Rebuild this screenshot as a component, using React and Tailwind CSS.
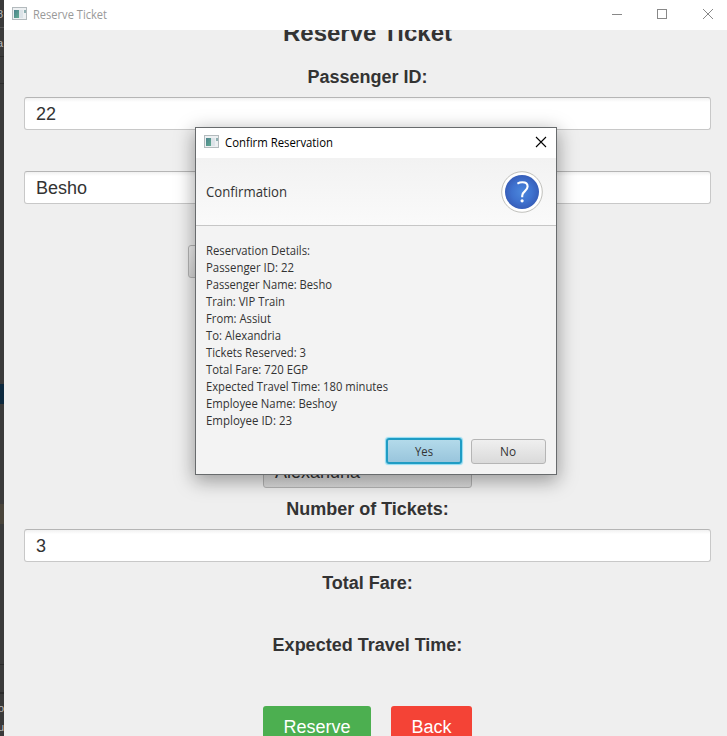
import React from "react";

const details = [
  { text: "Reservation Details:", width: 104 },
  { text: "Passenger ID: 22", width: 88 },
  { text: "Passenger Name: Besho", width: 126 },
  { text: "Train: VIP Train", width: 79 },
  { text: "From: Assiut", width: 65 },
  { text: "To: Alexandria", width: 75 },
  { text: "Tickets Reserved: 3", width: 100 },
  { text: "Total Fare: 720 EGP", width: 102 },
  { text: "Expected Travel Time: 180 minutes", width: 182 },
  { text: "Employee Name: Beshoy", width: 131 },
  { text: "Employee ID: 23", width: 86 },
];

// Single line of text stretched to an exact advance width.
function FitText({ text, width, size, baseline, fill, height }) {
  return (
    <svg className="block overflow-visible" width={width} height={height}>
      <text
        x="0"
        y={baseline}
        fontSize={size}
        fill={fill}
        textLength={width}
        lengthAdjust="spacingAndGlyphs"
      >
        {text}
      </text>
    </svg>
  );
}

function AppIcon() {
  return (
    <svg width="16" height="14" viewBox="0 0 16 14" className="block shrink-0">
      <defs>
        <linearGradient id="pane" x1="0" y1="0" x2="1" y2="1">
          <stop offset="0" stopColor="#4b828c" />
          <stop offset="1" stopColor="#62ab92" />
        </linearGradient>
      </defs>
      <rect x="0.5" y="0.5" width="14" height="12" fill="#edf0f2" stroke="#b3babd" />
      <rect x="2" y="3" width="5" height="8" fill="url(#pane)" />
      <rect x="7" y="3" width="4" height="8" fill="#dce3e8" />
      <rect x="12" y="3" width="2" height="3" fill="#8fb0b2" />
    </svg>
  );
}

function Label({ children }) {
  return (
    <div className="h-[21px] shrink-0 text-center text-[18px] leading-[22px] font-bold whitespace-nowrap text-[#333]">
      {children}
    </div>
  );
}

function Field({ value }) {
  return (
    <div className="h-[33px] shrink-0 rounded-[3px] border border-[#c8c8c8] border-t-[#b5b5b5] bg-[linear-gradient(#f1f1f1,#fff_4px)] pl-[11px] text-[18px] leading-[32px] text-[#333]">
      {value}
    </div>
  );
}

function Combo({ value, wide }) {
  return (
    <div
      className={
        (wide ? "w-[359px]" : "w-[209px]") +
        " h-[33px] shrink-0 self-center rounded-[3px] border border-[#b5b5b5] bg-[linear-gradient(#efefef,#dadada)] pl-[11px] text-[18px] leading-[32px] text-[#333]"
      }
    >
      {value}
    </div>
  );
}

function Backdrop() {
  return (
    <div className="relative h-full w-1 shrink-0 overflow-hidden bg-[#3a3a3a] text-[11px] leading-3 text-[#b8b8b8]">
      <div className="absolute top-[27px] h-px w-1 bg-[#555]" />
      <div className="absolute top-[56px] h-px w-1 bg-[#2c2c2c]" />
      <div className="absolute top-[83px] h-px w-1 bg-[#2c2c2c]" />
      <div className="absolute top-[8px] right-[1px]">8</div>
      <div className="absolute top-[37px] right-[1px]">a</div>
      <div className="absolute top-[384px] h-5 w-1 bg-[#0d293e]" />
      <div className="absolute top-[504px] h-5 w-1 bg-[#49443a]" />
      <div className="absolute top-[664px] h-px w-1 bg-[#2a2a2a]" />
      <div className="absolute top-[692px] h-[2px] w-1 bg-[#2a2a2a]" />
      <div className="absolute top-[702px] right-0">o</div>
      <div className="absolute top-[721px] right-0">u</div>
    </div>
  );
}

function Dialog() {
  return (
    <div className="absolute top-[127px] left-[195px] flex h-[348px] w-[362px] flex-col border border-[#686b6d] bg-[#f3f3f3] font-['Open_Sans','Noto_Sans',sans-serif] shadow-[0_5px_18px_1px_rgba(0,0,0,0.36)]">
      <div className="flex h-[30px] shrink-0 bg-white pt-[7px] pl-2">
        <AppIcon />
        <div className="ml-[5px]">
          <FitText text="Confirm Reservation" width={108} size={12} baseline={12} height={16} fill="#000" />
        </div>
        <svg width="12" height="14" viewBox="0 0 12 14" className="mr-[9px] ml-auto block">
          <path d="M1 2 L11 12 M11 2 L1 12" stroke="#000" strokeWidth="1.1" fill="none" />
        </svg>
      </div>
      <div className="flex h-[68px] shrink-0 items-center border-b border-[#c6c6c6] bg-[linear-gradient(#f2f2f2,#fafafa)] pr-[13px] pl-[10px]">
        <FitText text="Confirmation" width={81} size={14} baseline={15} height={20} fill="#333" />
        <svg width="42" height="42" viewBox="0 0 42 42" className="ml-auto block">
          <defs>
            <radialGradient id="ball">
              <stop offset="0" stopColor="#4b87dc" />
              <stop offset="0.6" stopColor="#3f72cf" />
              <stop offset="1" stopColor="#375eb9" />
            </radialGradient>
          </defs>
          <circle cx="21" cy="21" r="20.3" fill="#fff" stroke="#c0c0bc" strokeWidth="1" />
          <circle cx="21" cy="21" r="17" fill="url(#ball)" />
          <path
            d="M16.4 12.6C18 11.7 19.6 11.3 21.4 11.3C24.9 11.3 26.6 13 26.6 15.5C26.6 20.2 21.2 20 21.2 24.8V26.2"
            fill="none"
            stroke="#fff"
            strokeWidth="2.1"
          />
          <circle cx="21.1" cy="29.8" r="1.6" fill="#fff" />
        </svg>
      </div>
      <div className="flex flex-col pt-4 pl-[10px]">
        {details.map((line) => (
          <FitText key={line.text} text={line.text} width={line.width} size={12} baseline={13} height={17} fill="#333" />
        ))}
      </div>
      <div className="mt-[9px] flex justify-end gap-[9px] pr-[10px]">
        <div className="flex h-[26px] w-[76px] justify-center rounded-[3px] border-2 border-[#1f9cc4] bg-[linear-gradient(#b3daea,#99c5dc)] pt-[3px] shadow-[0_0_1px_0.5px_#8fdcf3]">
          <FitText text="Yes" width={18} size={12} baseline={13} height={16} fill="#333" />
        </div>
        <div className="flex h-[25px] w-[75px] justify-center self-center rounded-[3px] border border-[#b5b5b5] bg-[linear-gradient(#efefef,#dadada)] pt-[3px] pr-[2px]">
          <FitText text="No" width={16} size={12} baseline={13} height={16} fill="#333" />
        </div>
      </div>
    </div>
  );
}

export default function App() {
  return (
    <div className="relative flex h-[736px] w-[727px] overflow-hidden bg-[#efefef] font-['Liberation_Sans',Arial,sans-serif]">
      <Backdrop />
      <div className="flex min-w-0 flex-1 flex-col">
        <div className="flex h-[30px] shrink-0 bg-white pt-[7px] pl-2 font-['Open_Sans','Noto_Sans',sans-serif]">
          <AppIcon />
          <div className="ml-[5px]">
            <FitText text="Reserve Ticket" width={74} size={12} baseline={12} height={16} fill="#999" />
          </div>
          <svg width="103" height="14" viewBox="0 0 103 14" className="mr-[13px] ml-auto block" fill="none" stroke="#888" strokeWidth="1">
            <path d="M1 7.5H11" />
            <rect x="46.5" y="2.5" width="9" height="9" />
            <path d="M92 2L102 12M102 2L92 12" />
          </svg>
        </div>
        <div className="flex min-h-0 flex-1 flex-col gap-[10px] overflow-hidden pr-4 pl-5">
          <div className="-mt-[11px] h-[37px] shrink-0 text-center text-[24px] leading-[27px] font-bold text-[#333]">
            Reserve Ticket
          </div>
          <Label>Passenger ID:</Label>
          <Field value="22" />
          <div className="h-[21px] shrink-0" />
          <Field value="Besho" />
          <div className="h-[21px] shrink-0" />
          <Combo wide />
          <div className="h-[157px] shrink-0" />
          <Combo value="Alexandria" />
          <Label>Number of Tickets:</Label>
          <Field value="3" />
          <Label>Total Fare:</Label>
          <div className="h-[21px] shrink-0" />
          <Label>Expected Travel Time:</Label>
          <div className="h-[21px] shrink-0" />
          <div className="mt-[10px] flex shrink-0 justify-center gap-5 text-[18px] leading-[21px] text-white">
            <div className="w-[108px] rounded-[3px] bg-[#4caf50] pt-[11px] pb-[9px] text-center">Reserve</div>
            <div className="w-[81px] rounded-[3px] bg-[#f44336] pt-[11px] pb-[9px] text-center">Back</div>
          </div>
        </div>
      </div>
      <Dialog />
    </div>
  );
}
